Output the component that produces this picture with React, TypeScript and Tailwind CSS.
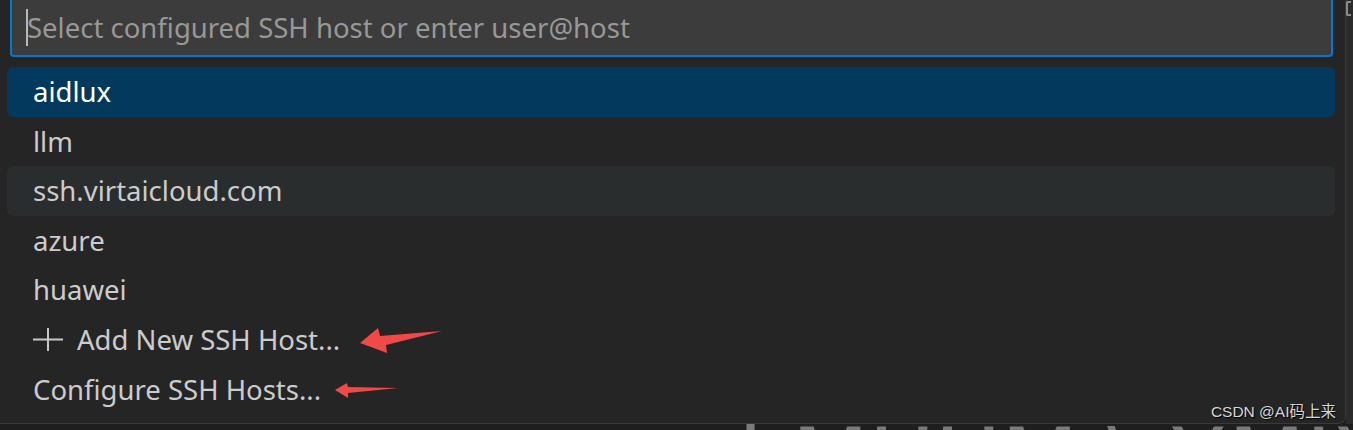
import React from 'react';

const hosts = ['aidlux', 'llm', 'ssh.virtaicloud.com', 'azure', 'huawei'];

const PlusIcon: React.FC = () => (
    <svg width="30" height="24" viewBox="0 0 30 24" className="mr-[14px] shrink-0">
        <path d="M0 11.5H30M15 0V23" stroke="#c8c8c8" strokeWidth="2" fill="none" />
    </svg>
);

const Arrows: React.FC = () => (
    <svg width="1346" height="423" viewBox="0 0 1346 423" className="pointer-events-none absolute left-0 top-0">
        <path d="M360 343 L378 328 L380 336 L442 331 L386 345 L387 353 Z" fill="#f14848" />
        <path d="M335 390 L347 383 L348 387 L398 388 L348 393 L348 398 Z" fill="#f14848" />
    </svg>
);

const Row: React.FC<{ label: string; selected?: boolean; hovered?: boolean; plus?: boolean }> = ({ label, selected, hovered, plus }) => (
    <div
        className={`flex h-[49.6px] items-center rounded-[6px] pl-[26px] ${selected ? 'bg-[#04395e] text-white' : hovered ? 'bg-[#2a2d2e] text-[#cccccc]' : 'text-[#cccccc]'}`}
    >
        {plus && <PlusIcon />}
        <span className="leading-none">{label}</span>
    </div>
);

const App: React.FC = () => {
    return (
        <div className="flex h-[430px] w-[1353px] flex-col overflow-hidden bg-[#1e1e1e] text-[27.5px]" style={{ fontFamily: '"Noto Sans", "Open Sans", sans-serif' }}>
            <div className="flex h-[424px] shrink-0">
                <div className="relative h-full w-[1346px] rounded-br-[8px] border-r border-b border-[#3a3a3a] bg-[#252526]">
                    <div className="pl-[10px] pr-[12px]">
                        <div className="flex h-[57px] items-center rounded-b-[4px] border-x-2 border-b-2 border-[#0078d4] bg-[#3c3c3c] pl-[14px]">
                            <span className="mr-[-1px] h-[37px] w-[2px] bg-[#b8b8b8]" />
                            <span className="text-[#989898] leading-none">Select configured SSH host or enter user@host</span>
                        </div>
                    </div>
                    <div className="mt-[10px] flex w-[1335px] flex-col pl-[7px]">
                        {hosts.map((h, i) => (
                            <Row key={h} label={h} selected={i === 0} hovered={i === 2} />
                        ))}
                        <Row label="Add New SSH Host..." plus />
                        <Row label="Configure SSH Hosts..." />
                    </div>
                    <Arrows />
                    <div
                        className="absolute bottom-[4px] right-[9px] text-[15.5px] leading-none text-[#d6d6d6]"
                        style={{ fontFamily: '"Liberation Sans", "Noto Sans CJK SC", sans-serif', textShadow: '1px 1px 1px #000' }}
                    >
                        CSDN @AI码上来
                    </div>
                </div>
                <div className="flex h-full w-[7px] flex-col bg-[#2b2b2b]">
                    <div className="mt-[1px] h-[15px] w-[5px] rounded-l-[2px] border-l-2 border-y-2 border-[#8a8a8a]" />
                </div>
            </div>
            <div className="relative flex-1 overflow-hidden">
                <div
                    className="absolute left-[738px] top-[-7px] whitespace-nowrap text-[90px] leading-none text-[#7a7a7a]"
                    style={{ fontFamily: '"DejaVu Sans", sans-serif' }}
                >
                    l MUUM \ XMIX \
                </div>
            </div>
        </div>
    );
};

export default App;
